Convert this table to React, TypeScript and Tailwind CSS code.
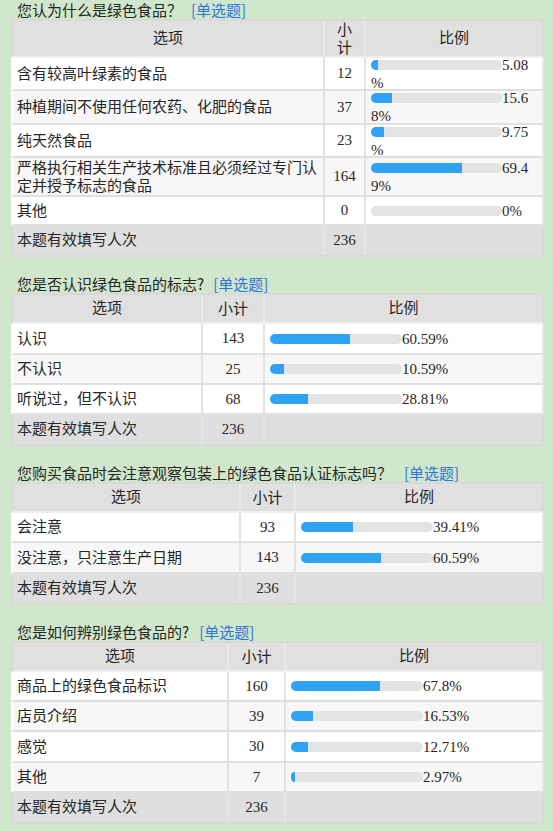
type Row = {
  label: string[];
  count: number;
  value: number;
  pct: string[];
  h: string;
};

type Section = {
  title: string;
  tagGap: string;
  cols: [string, string, string];
  headerH: string;
  countHead: string[];
  barW: number;
  rows: Row[];
};

const sections: Section[] = [
  {
    title: '您认为什么是绿色食品？',
    tagGap: 'ml-[9px]',
    cols: ['w-[312px]', 'w-[41px]', 'w-[176px]'],
    headerH: 'h-[39px]',
    countHead: ['小', '计'],
    barW: 131,
    rows: [
      { label: ['含有较高叶绿素的食品'], count: 12, value: 5.08, pct: ['5.08', '%'], h: 'h-[33px]' },
      { label: ['种植期间不使用任何农药、化肥的食品'], count: 37, value: 15.68, pct: ['15.6', '8%'], h: 'h-[34px]' },
      { label: ['纯天然食品'], count: 23, value: 9.75, pct: ['9.75', '%'], h: 'h-[33px]' },
      {
        label: ['严格执行相关生产技术标准且必须经过专门认', '定并授予标志的食品'],
        count: 164,
        value: 69.49,
        pct: ['69.4', '9%'],
        h: 'h-[39px]',
      },
      { label: ['其他'], count: 0, value: 0, pct: ['0%'], h: 'h-[29px]' },
    ],
  },
  {
    title: '您是否认识绿色食品的标志?',
    tagGap: 'ml-[9px]',
    cols: ['w-[190px]', 'w-[62px]', 'w-[277px]'],
    headerH: 'h-[31px]',
    countHead: ['小计'],
    barW: 132,
    rows: [
      { label: ['认识'], count: 143, value: 60.59, pct: ['60.59%'], h: 'h-[31px]' },
      { label: ['不认识'], count: 25, value: 10.59, pct: ['10.59%'], h: 'h-[30px]' },
      { label: ['听说过，但不认识'], count: 68, value: 28.81, pct: ['28.81%'], h: 'h-[30px]' },
    ],
  },
  {
    title: '您购买食品时会注意观察包装上的绿色食品认证标志吗？',
    tagGap: 'ml-[12px]',
    cols: ['w-[228px]', 'w-[55px]', 'w-[246px]'],
    headerH: 'h-[31px]',
    countHead: ['小计'],
    barW: 132,
    rows: [
      { label: ['会注意'], count: 93, value: 39.41, pct: ['39.41%'], h: 'h-[30px]' },
      { label: ['没注意，只注意生产日期'], count: 143, value: 60.59, pct: ['60.59%'], h: 'h-[31px]' },
    ],
  },
  {
    title: '您是如何辨别绿色食品的?',
    tagGap: 'ml-[10px]',
    cols: ['w-[216px]', 'w-[57px]', 'w-[256px]'],
    headerH: 'h-[31px]',
    countHead: ['小计'],
    barW: 132,
    rows: [
      { label: ['商品上的绿色食品标识'], count: 160, value: 67.8, pct: ['67.8%'], h: 'h-[30px]' },
      { label: ['店员介绍'], count: 39, value: 16.53, pct: ['16.53%'], h: 'h-[30px]' },
      { label: ['感觉'], count: 30, value: 12.71, pct: ['12.71%'], h: 'h-[31px]' },
      { label: ['其他'], count: 7, value: 2.97, pct: ['2.97%'], h: 'h-[30px]' },
    ],
  },
];

export default function App() {
  return (
    <div className="min-h-screen bg-[#d0e7cc] text-[#262626]">
      {sections.map((s, i) => (
        <ResultTable key={i} section={s} first={i === 0} />
      ))}
    </div>
  );
}

function Lines({ lines }: { lines: string[] }) {
  return (
    <div className="leading-[18px]">
      {lines.map((l, i) => (
        <div key={i}>{l}</div>
      ))}
    </div>
  );
}

function Bar({ width, value }: { width: number; value: number }) {
  const fill = Math.round((value / 100) * width);
  return (
    <div className="h-[10px] shrink-0 rounded-full bg-[#e3e3e3]" style={{ width }}>
      <div className="h-full rounded-l-full bg-[#2ea2f3]" style={{ width: fill }} />
    </div>
  );
}

function ResultTable({ section, first }: { section: Section; first: boolean }) {
  const [c1, c2, c3] = section.cols;
  const cell = "flex shrink-0 items-center text-[15px] font-['Liberation_Serif','Noto_Sans_CJK_SC',serif]";

  return (
    <section className={first ? '' : 'mt-[17px]'}>
      <div className="flex h-[19px] items-center pl-[17px] text-[15px] leading-[19px] font-['Noto_Sans_CJK_SC',sans-serif]">
        <span>{section.title}</span>
        <span className={`${section.tagGap} text-[#2f74dc]`}>[单选题]</span>
      </div>

      <div className="ml-[11px] w-[533px]">
        {/* header */}
        <div className={`flex ${section.headerH} border-x-2 border-t-2 border-b-2 border-x-[#d9d9d9] border-t-[#d9d9d9] border-b-[#eeeeee] bg-[#e0e0e0]`}>
          <div className={`${cell} ${c1} justify-center border-r-2 border-[#e9e9e9]`}>选项</div>
          <div className={`${cell} ${c2} justify-center border-r-2 border-[#e9e9e9] text-center`}>
            <Lines lines={section.countHead} />
          </div>
          <div className={`${cell} ${c3} justify-center`}>比例</div>
        </div>

        {/* rows */}
        {section.rows.map((r, i) => (
          <div
            key={i}
            className={`flex ${r.h} border-x-2 border-b-2 border-l-white border-r-[#e6e6e6] border-b-[#e0e0e0] ${
              i % 2 === 1 ? 'bg-[#f7f7f7]' : 'bg-white'
            }`}
          >
            <div className={`${cell} ${c1} border-r-2 border-[#e2e2e2] pl-[4px]`}>
              <Lines lines={r.label} />
            </div>
            <div className={`${cell} ${c2} justify-center border-r-2 border-[#e2e2e2]`}>{r.count}</div>
            <div className={`${cell} ${c3} pl-[5px]`}>
              <div className="leading-[18px]">
                <div className="flex items-center">
                  <Bar width={section.barW} value={r.value} />
                  <span>{r.pct[0]}</span>
                </div>
                {r.pct[1] && <div>{r.pct[1]}</div>}
              </div>
            </div>
          </div>
        ))}

        {/* footer */}
        <div className="flex h-[31px] border-x-2 border-b-2 border-[#d9d9d9] bg-[#dfdfdf]">
          <div className={`${cell} ${c1} border-r-2 border-[#e6e6e6] pl-[4px]`}>本题有效填写人次</div>
          <div className={`${cell} ${c2} justify-center border-r-2 border-[#e6e6e6]`}>236</div>
          <div className={`${cell} ${c3}`} />
        </div>
      </div>
    </section>
  );
}
